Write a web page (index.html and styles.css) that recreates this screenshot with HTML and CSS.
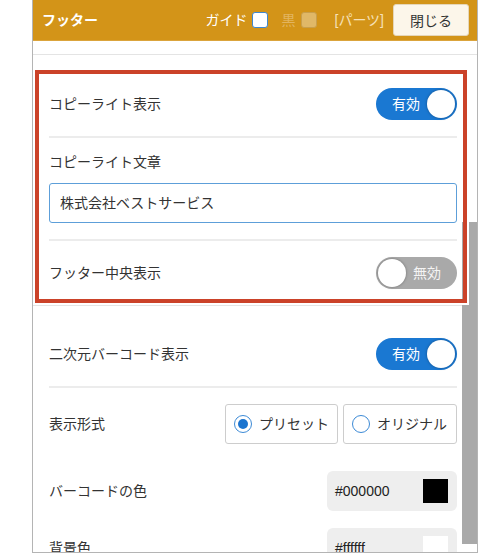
FILE: index.html
```html
<!DOCTYPE html>
<html lang="ja">
<head>
<meta charset="utf-8">
<title>フッター</title>
<link rel="stylesheet" href="styles.css">
</head>
<body>
<div class="panel">
  <header class="head">
    <span class="title">フッター</span>
    <div class="tools">
      <span class="tool-label">ガイド</span><span class="cb"></span>
      <span class="tool-label dim">黒</span><span class="cb cb-dis"></span>
      <span class="parts">[パーツ]</span>
      <button class="close">閉じる</button>
    </div>
  </header>
  <div class="tail"></div>
  <section class="sec sec-first">
    <div class="row">
      <span class="lbl">コピーライト表示</span>
      <span class="tg on"><span class="tg-t">有効</span><span class="knob"></span></span>
    </div>
    <div class="field">
      <div class="lbl">コピーライト文章</div>
      <div class="inp">株式会社ベストサービス</div>
    </div>
    <div class="row last">
      <span class="lbl">フッター中央表示</span>
      <span class="tg off"><span class="knob"></span><span class="tg-t">無効</span></span>
    </div>
  </section>
  <section class="sec">
    <div class="row">
      <span class="lbl">二次元バーコード表示</span>
      <span class="tg on"><span class="tg-t">有効</span><span class="knob"></span></span>
    </div>
    <div class="row last radio-row">
      <span class="lbl">表示形式</span>
      <div class="radios">
        <span class="rb rb1"><span class="dot sel"></span>プリセット</span>
        <span class="rb rb2"><span class="dot"></span>オリジナル</span>
      </div>
    </div>
    <div class="row last color-row">
      <span class="lbl">バーコードの色</span>
      <span class="cbox"><span class="hex">#000000</span><span class="sw sw-black"></span></span>
    </div>
    <div class="row last color-row">
      <span class="lbl">背景色</span>
      <span class="cbox"><span class="hex">#ffffff</span><span class="sw sw-white"></span></span>
    </div>
  </section>
  <div class="thumb"></div>
  <div class="mark"></div>
</div>
</body>
</html>
```

FILE: styles.css
```css
html, body {
  margin: 0;
  padding: 0;
  background: #fff;
}
body {
  font-family: "Liberation Sans", "Noto Sans CJK JP", sans-serif;
  font-size: 14px;
  line-height: 20px;
  color: #333;
}
.panel {
  position: relative;
  margin-left: 32px;
  width: 444px;
  height: 552px;
  border: 1px solid #b4b4b4;
  border-top: 0;
  overflow: hidden;
}
.head {
  display: flex;
  align-items: center;
  height: 40px;
  padding: 0 8px 0 9px;
  background: #d39418;
  border-bottom: 1px solid #dba43c;
  color: #fff;
}
.title {
  font-weight: bold;
}
.tools {
  margin-left: auto;
  display: flex;
  align-items: center;
}
.cb {
  width: 16px;
  height: 16px;
  box-sizing: border-box;
  margin-left: 4px;
  margin-right: 14px;
  background: #fff;
  border: 1px solid #3f87cf;
  border-radius: 3px;
}
.dim {
  color: #e2b460;
}
.cb-dis {
  margin-left: 5px;
  margin-right: 18px;
  background: #e0b867;
  border-color: #c89f4c;
}
.parts {
  color: #f6e1b8;
  margin-right: 9px;
}
.close {
  width: 76px;
  height: 32px;
  box-sizing: border-box;
  background: #fcf6ea;
  border: 1px solid #e5d6b8;
  border-radius: 3px;
  font-family: inherit;
  font-size: 14px;
  color: #333;
  padding: 0;
}
.tail {
  height: 13px;
  border-bottom: 1px solid #e4e4e4;
}
.sec {
  padding: 16px 20px 0 16px;
  border-bottom: 1px solid #e4e4e4;
}
.sec-first {
  padding-top: 17px;
}
.row {
  display: flex;
  align-items: center;
  justify-content: space-between;
  padding: 16px 0;
  border-bottom: 2px solid #ececec;
}
.row.last {
  border-bottom: 0;
}
.field {
  padding: 14px 0 16px;
  border-bottom: 2px solid #ececec;
}
.inp {
  margin-top: 11px;
  height: 40px;
  box-sizing: border-box;
  border: 1px solid #5d9fd9;
  border-radius: 3px;
  padding: 0 10px;
  display: flex;
  align-items: center;
}
.tg {
  display: flex;
  align-items: center;
  width: 81px;
  height: 32px;
  box-sizing: border-box;
  padding: 0 2px;
  border-radius: 16px;
}
.tg.on {
  background: #1a78d2;
  justify-content: flex-end;
}
.tg.off {
  background: #a9a9a9;
}
.knob {
  width: 28px;
  height: 28px;
  border-radius: 50%;
  background: #fff;
  box-shadow: 0 0 3px rgba(0, 0, 0, 0.35);
}
.tg-t {
  color: #fff;
}
.on .tg-t {
  margin-right: 7px;
}
.off .tg-t {
  margin-left: 7px;
  color: #f4f4f4;
}
.radio-row {
  padding: 16px 0 19px;
}
.radios {
  display: flex;
  gap: 5px;
}
.rb {
  display: flex;
  align-items: center;
  height: 40px;
  box-sizing: border-box;
  border: 1px solid #cdcdcd;
  border-radius: 3px;
  padding-left: 8px;
}
.rb1 {
  width: 113px;
}
.rb2 {
  width: 114px;
}
.dot {
  width: 18px;
  height: 18px;
  box-sizing: border-box;
  border: 1.5px solid #3c8ad6;
  border-radius: 50%;
  margin-right: 7px;
  display: flex;
  align-items: center;
  justify-content: center;
}
.dot.sel::after {
  content: "";
  width: 10px;
  height: 10px;
  border-radius: 50%;
  background: #1a74cf;
}
.color-row {
  padding: 8px 0 9px;
}
.cbox {
  display: flex;
  align-items: center;
  justify-content: space-between;
  width: 130px;
  height: 40px;
  box-sizing: border-box;
  padding: 0 9px 0 8px;
  background: #eee;
  border-radius: 6px;
  color: #222;
}
.sw {
  width: 25px;
  height: 24px;
}
.sw-black {
  background: #000;
}
.sw-white {
  background: #fff;
}
.thumb {
  position: absolute;
  right: 0;
  top: 222px;
  width: 15px;
  height: 322px;
  background: #a9a9a9;
}
.mark {
  position: absolute;
  left: 2px;
  top: 70px;
  width: 432px;
  height: 233px;
  box-sizing: border-box;
  border: 4px solid #cb4229;
  outline: 2px solid #fff;
}
```
